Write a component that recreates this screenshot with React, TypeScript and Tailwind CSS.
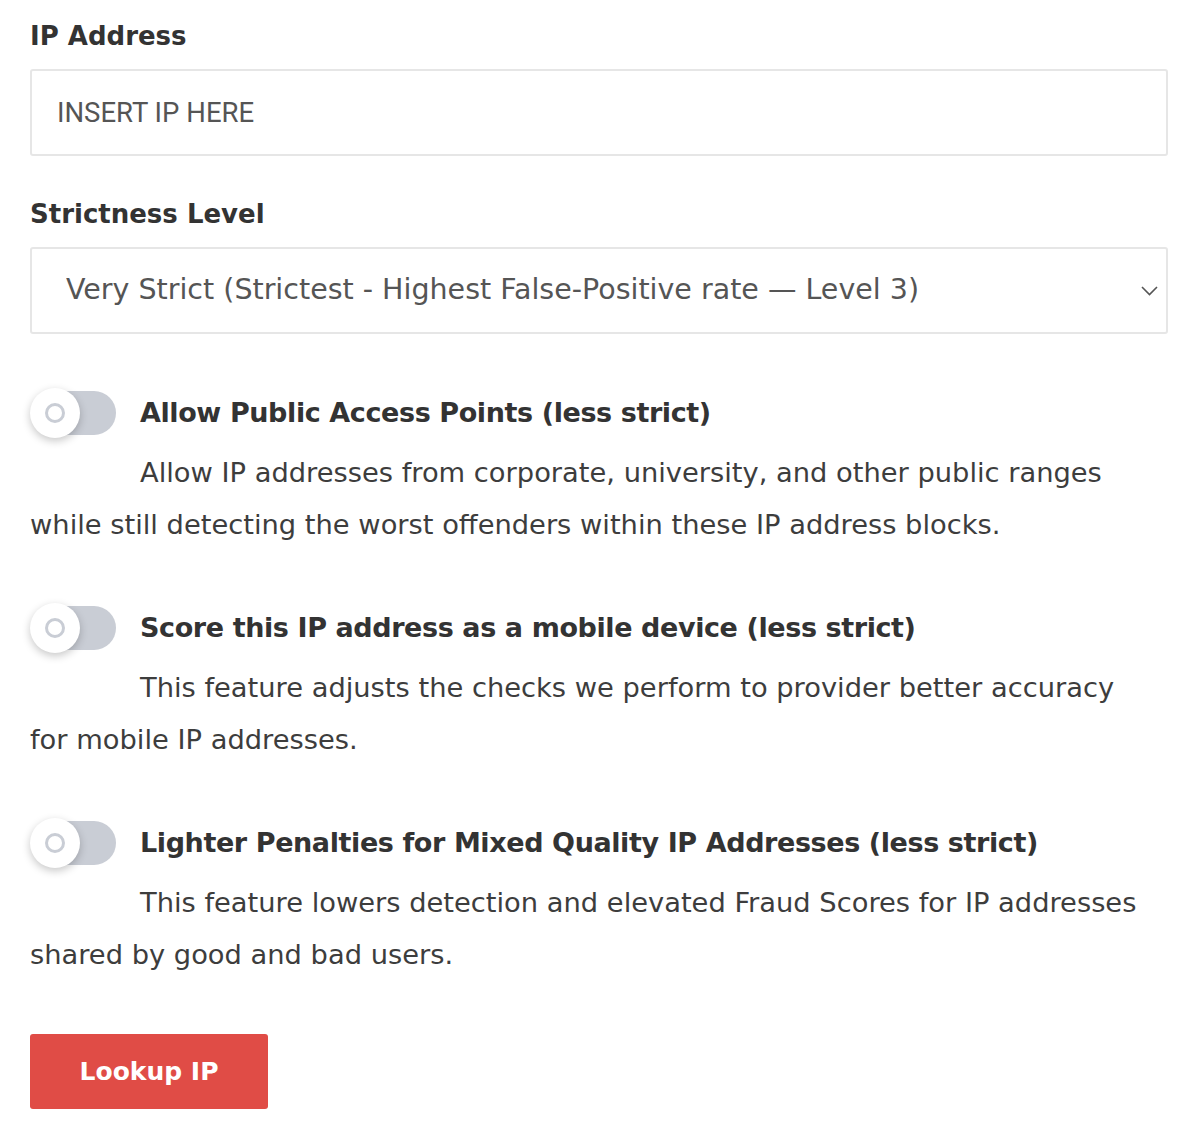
import { useState } from 'react'

const options = [
  'Very Strict (Strictest - Highest False-Positive rate — Level 3)',
  'Strict (Level 2)',
  'Normal (Level 1)',
  'Relaxed (Level 0)',
]

// lines are split where the original page wraps them
const toggles = [
  {
    id: 'public',
    title: 'Allow Public Access Points (less strict)',
    lines: [
      'Allow IP addresses from corporate, university, and other public ranges',
      'while still detecting the worst offenders within these IP address blocks.',
    ],
  },
  {
    id: 'mobile',
    title: 'Score this IP address as a mobile device (less strict)',
    lines: ['This feature adjusts the checks we perform to provider better accuracy', 'for mobile IP addresses.'],
  },
  {
    id: 'mixed',
    title: 'Lighter Penalties for Mixed Quality IP Addresses (less strict)',
    lines: ['This feature lowers detection and elevated Fraud Scores for IP addresses', 'shared by good and bad users.'],
  },
]

function Toggle({ on, onChange }: { on: boolean; onChange: () => void }) {
  return (
    <button
      type="button"
      onClick={onChange}
      className="relative h-[52px] w-[86px] shrink-0"
    >
      <span
        className={`absolute right-0 top-[4px] h-[44px] w-[70px] rounded-full ${on ? 'bg-[#e04c46]' : 'bg-[#c9cdd5]'}`}
      />
      <span
        className={`absolute top-[1px] flex h-[50px] w-[50px] items-center justify-center rounded-full bg-white shadow-[0_3px_8px_rgba(0,0,0,0.22)] ${on ? 'left-[36px]' : 'left-0'}`}
      >
        <span className="h-[20px] w-[20px] rounded-full border-[3px] border-[#c9cdd5]" />
      </span>
    </button>
  )
}

export default function App() {
  const [ip, setIp] = useState('')
  const [level, setLevel] = useState(options[0])
  const [flags, setFlags] = useState<Record<string, boolean>>({})

  return (
    <div className="min-h-screen bg-white px-[30px] pt-[16px] text-[#3a3a3a] font-['DejaVu_Sans',sans-serif]">
      <div className="w-[1138px]">
        <label className="block text-[26px] font-bold leading-[40px] text-[#333]">IP Address</label>
        <input
          value={ip}
          onChange={(e) => setIp(e.target.value)}
          placeholder="INSERT IP HERE"
          className="mt-[13px] block h-[87px] w-full rounded-[3px] border-2 border-[#e6e6e6] px-[25px] font-['Roboto',sans-serif] text-[27.5px] text-[#555] placeholder:text-[#555] outline-none"
        />

        <label className="mt-[38px] block text-[26px] font-bold leading-[40px] text-[#333]">Strictness Level</label>
        <div className="relative mt-[13px]">
          <select
            value={level}
            onChange={(e) => setLevel(e.target.value)}
            className="block h-[87px] w-full appearance-none rounded-[3px] border-2 border-[#e6e6e6] bg-white pl-[34px] text-[28.5px] text-[#555] outline-none"
          >
            {options.map((o) => (
              <option key={o}>{o}</option>
            ))}
          </select>
          <svg
            className="pointer-events-none absolute right-[10px] top-[39px]"
            width="17"
            height="10"
            viewBox="0 0 17 10"
            fill="none"
            stroke="#555"
            strokeWidth="1.6"
          >
            <polyline points="1,1 8.5,8.5 16,1" />
          </svg>
        </div>

        {toggles.map((t, i) => (
          <div key={t.id} className={i === 0 ? 'mt-[53px]' : 'mt-[51px]'}>
            <div className="flex items-center gap-[24px]">
              <Toggle on={!!flags[t.id]} onChange={() => setFlags((f) => ({ ...f, [t.id]: !f[t.id] }))} />
              <span className="text-[27px] font-bold tracking-[-0.4px] text-[#333]">{t.title}</span>
            </div>
            <p className="mt-[8px] whitespace-nowrap indent-[110px] text-[27.3px] leading-[52px] text-[#3d3d3d]">
              {t.lines[0]}
              <br />
              {t.lines[1]}
            </p>
          </div>
        ))}

        <button
          type="button"
          className="mt-[53px] h-[75px] w-[238px] rounded-[3px] bg-[#e04c46] text-[25px] font-bold text-white"
        >
          Lookup IP
        </button>
      </div>
    </div>
  )
}
